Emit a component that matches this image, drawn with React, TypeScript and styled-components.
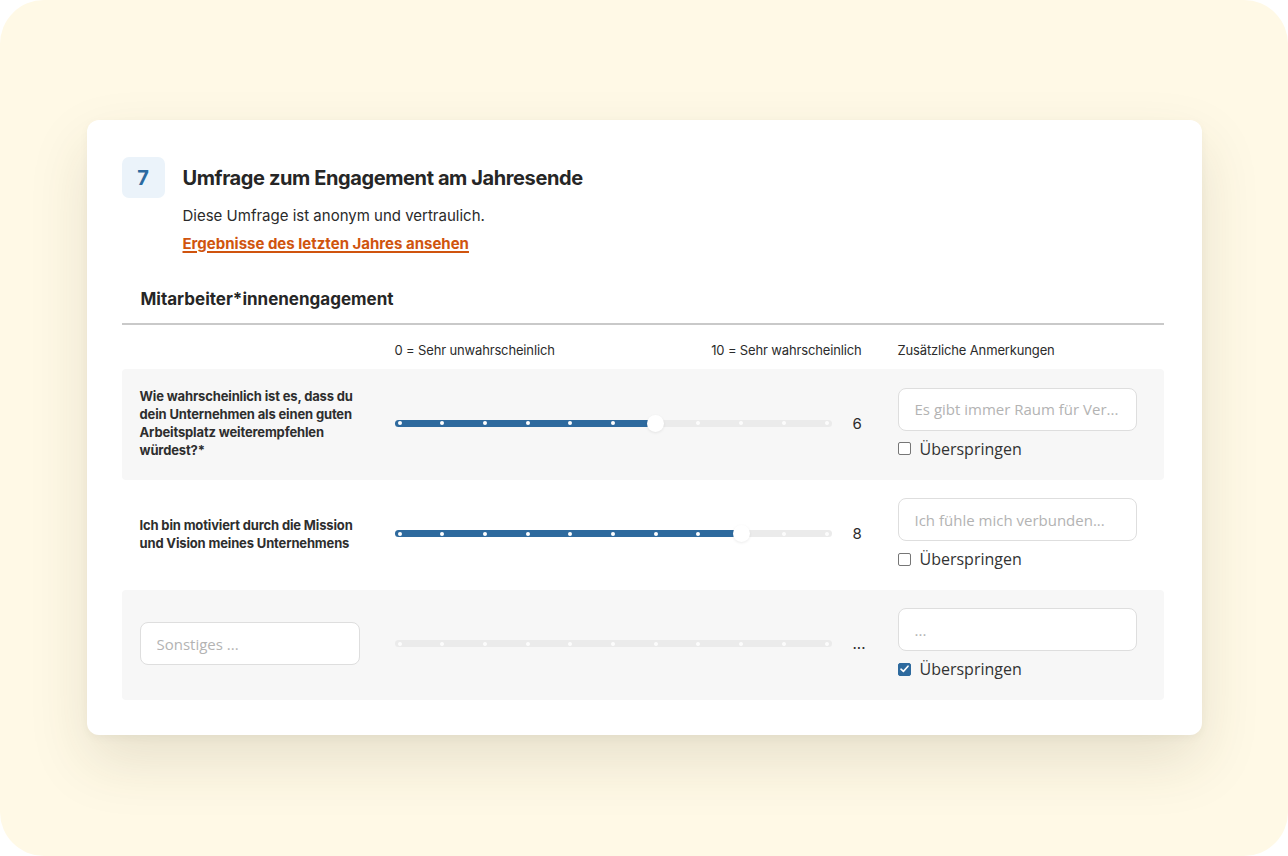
import React from "react";
import styled, { createGlobalStyle } from "styled-components";

const Global = createGlobalStyle`
  html, body { margin: 0; padding: 0; background: #ffffff; }
  body { font-family: Inter, "Liberation Sans", sans-serif; -webkit-font-smoothing: antialiased; }
  * { box-sizing: border-box; }
`;

const Backdrop = styled.div`
  width: 1288px;
  height: 856px;
  background: #fff9e6;
  border-radius: 44px;
  padding-top: 120px;
  display: flex;
  justify-content: center;
  align-items: flex-start;
  overflow: hidden;
`;

const Card = styled.section`
  width: 1115px;
  background: #ffffff;
  border-radius: 12px;
  padding: 37px 38px 35px 35px;
  box-shadow: 0 26px 60px rgba(70, 60, 30, 0.13), 0 3px 10px rgba(0, 0, 0, 0.04);
`;

const TitleRow = styled.div`
  display: flex;
  align-items: center;
  gap: 18px;
`;

const Badge = styled.div`
  width: 43px;
  height: 41px;
  border-radius: 7px;
  background: #ebf3fa;
  color: #2c6aa0;
  font-weight: 700;
  font-size: 20px;
  display: flex;
  align-items: center;
  justify-content: center;
`;

const Title = styled.h1`
  margin: 0;
  font-size: 20px;
  font-weight: 700;
  color: #262626;
  letter-spacing: -0.4px;
`;

const Intro = styled.div`
  margin-left: 61px;
  margin-top: 8px;
  display: flex;
  flex-direction: column;
  gap: 7px;
`;

const Lead = styled.p`
  margin: 0;
  font-size: 15px;
  line-height: 20px;
  color: #2a2a2a;
`;

const Link = styled.a`
  font-size: 15px;
  line-height: 20px;
  font-weight: 700;
  color: #d0540e;
  text-decoration: underline;
  text-decoration-thickness: 2px;
  text-underline-offset: 2px;
  cursor: pointer;
`;

const SectionTitle = styled.h2`
  margin: 34px 0 0;
  padding-left: 19px;
  font-size: 17px;
  line-height: 22px;
  font-weight: 700;
  color: #262626;
`;

const Divider = styled.hr`
  margin: 13px 0 0;
  border: 0;
  height: 2px;
  background: #c9c9c9;
`;

const Grid = styled.div<{ $shaded?: boolean }>`
  display: grid;
  grid-template-columns: 255px 437px 66px 239px;
  align-items: center;
  padding: 0 27px 0 18px;
  background: ${(p) => (p.$shaded ? "#f7f7f7" : "transparent")};
  border-radius: 4px;
`;

const HeaderGrid = styled(Grid)`
  padding-top: 17px;
  padding-bottom: 11px;
`;

const ScaleLabels = styled.div`
  grid-column: 2 / 4;
  display: flex;
  justify-content: space-between;
  padding-right: 36px;
  font-size: 13px;
  line-height: 16px;
  letter-spacing: -0.15px;
  color: #2b2b2b;
`;

const ColLabel = styled.div`
  font-size: 13px;
  line-height: 16px;
  letter-spacing: -0.15px;
  color: #2b2b2b;
`;

const Row = styled(Grid)`
  padding-top: 18px;
  padding-bottom: 21px;
  min-height: 110px;
`;

const Question = styled.div`
  max-width: 222px;
  font-size: 13px;
  line-height: 18px;
  font-weight: 700;
  letter-spacing: -0.15px;
  color: #2e2e2e;
`;

const TextInput = styled.input<{ $w?: number }>`
  width: ${(p) => (p.$w ? `${p.$w}px` : "100%")};
  height: 43px;
  border: 1px solid #dedede;
  border-radius: 8px;
  background: #ffffff;
  padding: 0 16px;
  font-family: "Open Sans", "Liberation Sans", sans-serif;
  font-size: 15px;
  color: #333;
  outline: none;
  &::placeholder { color: #b3b3b3; }
`;

const Track = styled.div`
  position: relative;
  width: 437px;
  height: 7px;
  border-radius: 4px;
  background: #ebebeb;
`;

const Fill = styled.div`
  position: absolute;
  left: 0;
  top: 0;
  bottom: 0;
  border-radius: 4px 0 0 4px;
  background: #2e6a9e;
`;

const Dot = styled.span<{ $on: boolean }>`
  position: absolute;
  top: 1.5px;
  width: 4px;
  height: 4px;
  margin-left: -2px;
  border-radius: 50%;
  background: ${(p) => (p.$on ? "#ffffff" : "rgba(255,255,255,0.85)")};
`;

const Thumb = styled.span`
  position: absolute;
  top: -5px;
  width: 17px;
  height: 17px;
  margin-left: -8.5px;
  border-radius: 50%;
  background: #ffffff;
  box-shadow: 0 1px 3px rgba(0, 0, 0, 0.08);
`;

const Value = styled.div`
  padding-left: 21px;
  font-size: 15px;
  color: #2b2b2b;
`;

const CommentCol = styled.div`
  display: flex;
  flex-direction: column;
  gap: 8px;
`;

const SkipLabel = styled.label`
  display: flex;
  align-items: center;
  gap: 9px;
  height: 20px;
  font-family: "Open Sans", "Liberation Sans", sans-serif;
  font-size: 16px;
  color: #333;
`;

const Box = styled.span<{ $checked: boolean }>`
  width: 13px;
  height: 13px;
  border-radius: 2px;
  border: 1px solid ${(p) => (p.$checked ? "#2e6a9e" : "#767676")};
  background: ${(p) => (p.$checked ? "#2e6a9e" : "#fff")};
  display: flex;
  align-items: center;
  justify-content: center;
`;

const Slider: React.FC<{ value: number | null }> = ({ value }) => {
  const start = 5;
  const step = 42.7;
  const pos = value === null ? 0 : start + value * step;
  return (
    <Track>
      {value !== null && <Fill style={{ width: pos }} />}
      {Array.from({ length: 11 }, (_, i) => (
        <Dot key={i} $on={value !== null && i < value} style={{ left: start + i * step }} />
      ))}
      {value !== null && <Thumb style={{ left: pos }} />}
    </Track>
  );
};

const Skip: React.FC<{ checked?: boolean }> = ({ checked = false }) => (
  <SkipLabel>
    <Box $checked={checked}>
      {checked && (
        <svg width="9" height="8" viewBox="0 0 9 8">
          <path d="M1 4.2 L3.4 6.4 L8 1.2" fill="none" stroke="#fff" strokeWidth="1.6" strokeLinecap="round" strokeLinejoin="round" />
        </svg>
      )}
    </Box>
    Überspringen
  </SkipLabel>
);

export default function App() {
  return (
    <>
      <Global />
      <Backdrop>
        <Card>
          <TitleRow>
            <Badge>7</Badge>
            <Title>Umfrage zum Engagement am Jahresende</Title>
          </TitleRow>
          <Intro>
            <Lead>Diese Umfrage ist anonym und vertraulich.</Lead>
            <div>
              <Link>Ergebnisse des letzten Jahres ansehen</Link>
            </div>
          </Intro>
          <SectionTitle>Mitarbeiter*innenengagement</SectionTitle>
          <Divider />
          <HeaderGrid>
            <div />
            <ScaleLabels>
              <span>0 = Sehr unwahrscheinlich</span>
              <span>10 = Sehr wahrscheinlich</span>
            </ScaleLabels>
            <ColLabel>Zusätzliche Anmerkungen</ColLabel>
          </HeaderGrid>
          <Row $shaded>
            <Question>Wie wahrscheinlich ist es, dass du dein Unternehmen als einen guten Arbeitsplatz weiterempfehlen würdest?*</Question>
            <Slider value={6} />
            <Value>6</Value>
            <CommentCol>
              <TextInput placeholder="Es gibt immer Raum für Ver..." />
              <Skip />
            </CommentCol>
          </Row>
          <Row>
            <Question>Ich bin motiviert durch die Mission und Vision meines Unternehmens</Question>
            <Slider value={8} />
            <Value>8</Value>
            <CommentCol>
              <TextInput placeholder="Ich fühle mich verbunden..." />
              <Skip />
            </CommentCol>
          </Row>
          <Row $shaded>
            <div>
              <TextInput $w={220} placeholder="Sonstiges ..." />
            </div>
            <Slider value={null} />
            <Value>...</Value>
            <CommentCol>
              <TextInput placeholder="..." />
              <Skip checked />
            </CommentCol>
          </Row>
        </Card>
      </Backdrop>
    </>
  );
}
